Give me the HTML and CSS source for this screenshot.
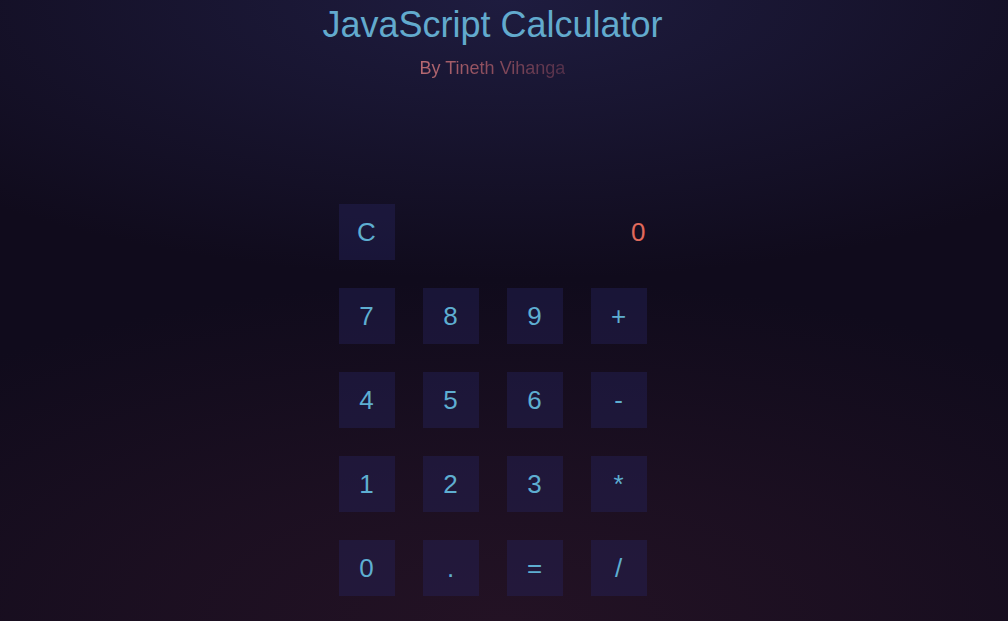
FILE: index.html
```html
<!DOCTYPE html>
<html lang="en">
<head>
<meta charset="utf-8">
<title>JavaScript Calculator</title>
<link rel="stylesheet" href="styles.css">
</head>
<body>
<main class="page">
  <header class="header">
    <h1 class="title">JavaScript Calculator</h1>
    <p class="byline">By Tineth Vihanga</p>
  </header>
  <section class="calc">
    <button class="key">C</button>
    <div class="display">0</div>
    <button class="key">7</button>
    <button class="key">8</button>
    <button class="key">9</button>
    <button class="key">+</button>
    <button class="key">4</button>
    <button class="key">5</button>
    <button class="key">6</button>
    <button class="key">-</button>
    <button class="key">1</button>
    <button class="key">2</button>
    <button class="key">3</button>
    <button class="key">*</button>
    <button class="key">0</button>
    <button class="key">.</button>
    <button class="key">=</button>
    <button class="key">/</button>
  </section>
</main>
</body>
</html>
```
FILE: styles.css
```css
html, body {
  margin: 0;
  height: 100%;
}
body {
  font-family: "Liberation Sans", Arial, sans-serif;
  background-color: #100b1c;
  background-image:
    radial-gradient(ellipse 75% 45% at 50% 0%, #1e1c3f 0%, rgba(30, 28, 63, 0.6) 40%, rgba(30, 28, 63, 0) 100%),
    radial-gradient(ellipse 80% 55% at 50% 100%, #231224 0%, rgba(35, 18, 36, 0.6) 45%, rgba(35, 18, 36, 0) 100%);
  overflow: hidden;
}
.page {
  box-sizing: border-box;
  width: 985px;
  display: flex;
  flex-direction: column;
  align-items: center;
}
.header {
  display: flex;
  flex-direction: column;
  align-items: center;
}
.title {
  margin: 4px 0 0;
  font-size: 36px;
  font-weight: normal;
  line-height: normal;
  color: #62aacd;
}
.byline {
  margin: 12px 0 0;
  font-size: 18px;
  line-height: normal;
  background: linear-gradient(to right, #b86a72 0%, #8a4c5c 50%, #53304a 100%);
  -webkit-background-clip: text;
  background-clip: text;
  color: transparent;
}
.calc {
  margin-top: 125px;
  display: grid;
  grid-template-columns: repeat(4, 56px);
  grid-auto-rows: 56px;
  gap: 28px;
}
.key {
  border: none;
  padding: 0;
  margin: 0;
  font-family: "Liberation Sans", Arial, sans-serif;
  font-size: 26px;
  color: #5eaed1;
  background: rgba(38, 36, 92, 0.42);
  display: flex;
  align-items: center;
  justify-content: center;
}
.display {
  grid-column: span 3;
  display: flex;
  align-items: center;
  justify-content: flex-end;
  font-size: 26px;
  color: #e0695b;
  padding-right: 1px;
}
```
